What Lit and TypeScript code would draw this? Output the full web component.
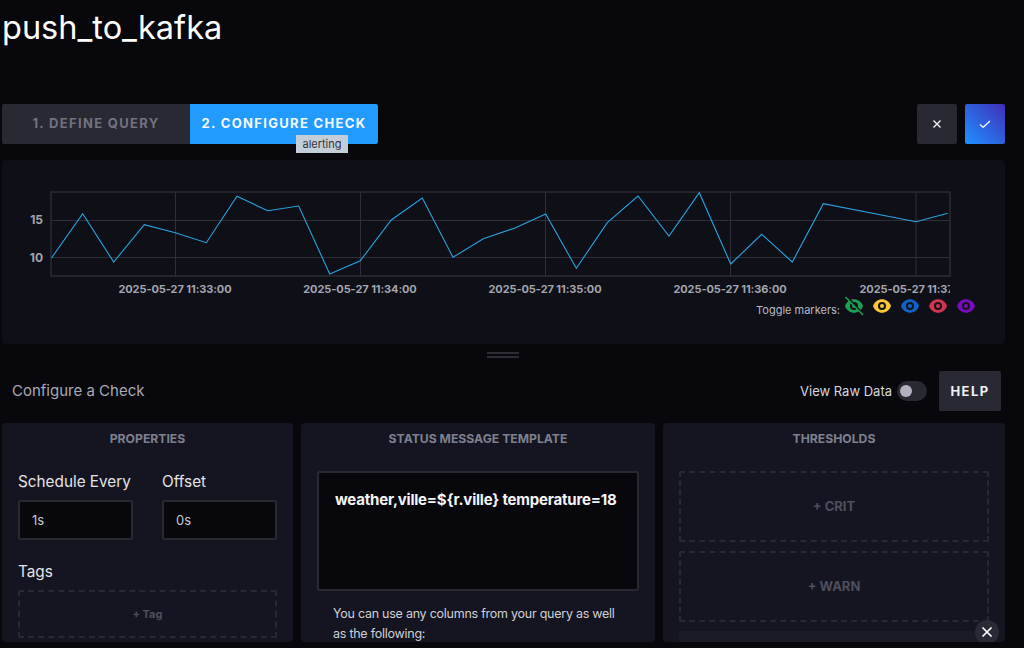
import { LitElement, html, css, svg } from "lit";
import { customElement } from "lit/decorators.js";

const PTS: [number, number][] = [
  [51.5,258],[82.7,213.7],[113.7,262],[144.3,224.7],[175.3,232.7],[206.3,242.7],[237,196.3],[267.7,210.7],[298.7,206],[329.7,274],[360.3,260.7],[391.3,220],[422.3,198],[453,257.3],[483.3,238.7],[515,228],[545.7,214],[576.3,268.3],[607.3,222.7],[638,196],[669,236],[699.3,192.7],[730.7,264],[761.7,234.3],[792.3,262],[823.3,203.7],[916,221.7],[947.7,213.3],
];
const VX = [175.5, 360.5, 545.5, 730.5, 916];
const TIMES = ["11:33:00", "11:34:00", "11:35:00", "11:36:00", "11:37:00"];
const EYES = [
  { c: "#1f9e55", off: true },
  { c: "#fdc836", off: false },
  { c: "#1161c9", off: false },
  { c: "#d5344f", off: false },
  { c: "#7a0cc0", off: false },
];

@customElement("app-root")
export class AppRoot extends LitElement {
  static styles = css`
    :host { display: block; width: 1024px; height: 648px; overflow: hidden; background: #07070c; font-family: "Inter", "Liberation Sans", sans-serif; color: #f1f1f3; }
    .page { box-sizing: border-box; height: 648px; padding: 0 19px 0 2px; display: flex; flex-direction: column; }
    h1 { margin: 0; height: 104px; box-sizing: border-box; padding-top: 9px; font-size: 32.5px; line-height: 38px; font-weight: 400; color: #fff; }
    .bar { display: flex; justify-content: space-between; height: 40px; margin-bottom: 16px; }
    .tabs { display: flex; position: relative; }
    .tab { width: 188px; height: 40px; display: flex; align-items: center; justify-content: center; font-size: 13px; font-weight: 700; letter-spacing: 1.33px; box-sizing: border-box; padding-bottom: 2px; }
    .tab.a { background: #292933; color: #72727f; border-radius: 2px 0 0 2px; }
    .tab.b { background: #229bff; color: #f4f9ff; border-radius: 0 2px 2px 0; }
    .tip { position: absolute; left: 294px; top: 31px; width: 52px; height: 18px; background: #c4ced9; color: #33343c; font-size: 11px; display: flex; align-items: center; justify-content: center; }
    .actions { display: flex; gap: 8px; }
    .act { width: 40px; height: 40px; border-radius: 2px; display: flex; align-items: center; justify-content: center; }
    .act.x { background: #292933; }
    .act.ok { background: linear-gradient(45deg, #1f91ff 0%, #3f2fb8 100%); }
    .graph { height: 184px; background: #0e0f17; border-radius: 4px; display: flex; flex-direction: column; }
    .chart { display: block; width: 1003px; height: 140px; }
    .ax { font: 700 11px "Inter", sans-serif; fill: #a4a5b0; letter-spacing: -0.08px; }
    .ay { font: 700 12px "Inter", sans-serif; fill: #a4a5b0; }
    .toggle { display: flex; justify-content: flex-end; align-items: flex-start; gap: 10px; padding-right: 30px; height: 20px; font-size: 11px; color: #b9bac3; }
    .toggle span { margin-right: -5px; line-height: 20px; }
    .toggle svg { display: block; margin-top: -1px; overflow: visible; }
    .split { height: 27px; box-sizing: border-box; padding-top: 8px; display: flex; justify-content: center; }
    .split i { display: block; width: 32px; border-top: 2px solid #2c2c37; border-bottom: 2px solid #2c2c37; height: 2px; margin-left: -1px; }
    .head { height: 40px; margin-bottom: 12px; display: flex; align-items: center; padding: 0 4px 0 10px; }
    .head .ttl { font-size: 15px; color: #a9aab4; flex: 1; padding-bottom: 1px; }
    .raw { font-size: 13px; color: #d6d6dc; margin-right: 5px; }
    .sw { width: 30px; height: 20px; border-radius: 10px; background: #292933; display: flex; align-items: center; padding-left: 3px; box-sizing: border-box; margin-right: 12px; }
    .sw i { display: block; width: 12px; height: 12px; border-radius: 50%; background: #b3b1c0; }
    .help { width: 62px; height: 40px; background: #292933; border-radius: 2px; display: flex; align-items: center; justify-content: center; font-size: 13px; font-weight: 700; letter-spacing: 1.4px; color: #f1f1f3; }
    .panels { display: grid; grid-template-columns: 291px 354px 342px; gap: 8px; height: 219px; margin: 0 0 6px; }
    .panel { position: relative; background: #141520; border-radius: 4px; overflow: hidden; box-sizing: border-box; padding: 8px 16px 0; }
    .pt { text-align: center; font-size: 12.2px; font-weight: 700; color: #7f808e; line-height: 15px; margin-bottom: 25px; }
    .fields { display: flex; gap: 29px; padding-top: 1px; }
    .lbl { font-size: 15.3px; line-height: 20px; color: #e4e4e8; margin-bottom: 8px; }
    .inp { width: 115px; height: 40px; box-sizing: border-box; background: #07070c; border: 2px solid #292933; border-radius: 2px; display: flex; align-items: center; padding-left: 12px; font-size: 13px; color: #c9c9d0; }
    .tags { margin-top: 22px; }
    .dash { border: 2px dashed #292933; border-radius: 2px; display: flex; align-items: center; justify-content: center; box-sizing: border-box; color: #4e4f5c; font-weight: 700; }
    .dash.tag { height: 48px; font-size: 11px; }
    .dash.th { height: 71px; font-size: 13px; margin-bottom: 9px; padding-bottom: 2px; }
    .tpl { height: 120px; box-sizing: border-box; background: #07070c; border: 2px solid #292933; border-radius: 2px; padding: 16px; font-size: 15px; font-weight: 700; letter-spacing: -0.2px; white-space: nowrap; color: #f4f4f6; line-height: 22px; margin-bottom: 13px; }
    .hint { font-size: 12.5px; letter-spacing: -0.25px; line-height: 20px; color: #d0d0d6; padding-left: 16px; margin: 0; width: 290px; }
    .stub { height: 12px; background: #1b1b25; }
    .close { position: absolute; right: 6px; bottom: 0; width: 24px; height: 24px; margin-bottom: -2px; border-radius: 50%; background: #2a2a36; display: flex; align-items: center; justify-content: center; }
  `;

  eye(c: string, off: boolean) {
    return html`<svg width="18" height="14" viewBox="0 0 18 14">
      <path d="M0 7 C3 -2 15 -2 18 7 C15 16 3 16 0 7Z" fill=${c}></path>
      <circle cx="9" cy="7" r="4" fill="#14151c"></circle>
      <circle cx="9" cy="7" r="2" fill=${c}></circle>
      ${off ? svg`<path d="M2.5 -1.5 L18.5 15.5" stroke="#0e0f17" stroke-width="2"></path><path d="M0.5 -2 L18 16" stroke=${c} stroke-width="1.5"></path>` : ""}
    </svg>`;
  }

  render() {
    const line = PTS.map((p) => p.join(",")).join(" ");
    return html`<div class="page">
      <h1>push_to_kafka</h1>
      <div class="bar">
        <div class="tabs">
          <div class="tab a">1. DEFINE QUERY</div>
          <div class="tab b">2. CONFIGURE CHECK</div>
          <div class="tip">alerting</div>
        </div>
        <div class="actions">
          <div class="act x"><svg width="10" height="10" viewBox="0 0 10 10"><path d="M1.5 1.5 L8.5 8.5 M8.5 1.5 L1.5 8.5" stroke="#f1f1f3" stroke-width="1.4"></path></svg></div>
          <div class="act ok"><svg width="12" height="10" viewBox="0 0 12 10"><path d="M1 5.5 L4.2 8.3 L11 2" fill="none" stroke="#f1f1f3" stroke-width="1.3"></path></svg></div>
        </div>
      </div>
      <div class="graph">
        <svg class="chart" viewBox="2 160 1003 140">
          <defs><clipPath id="cp"><rect x="40" y="185" width="910" height="115"></rect></clipPath></defs>
          ${VX.map((x) => svg`<line x1=${x} x2=${x} y1="192" y2="276" stroke="#2f2f3b" stroke-width="1"></line>`)}
          <line x1="51" x2="950" y1="220.5" y2="220.5" stroke="#2f2f3b"></line>
          <line x1="51" x2="950" y1="257.5" y2="257.5" stroke="#2f2f3b"></line>
          <rect x="51" y="192" width="899" height="84" fill="none" stroke="#2a2a36" stroke-width="1.6"></rect>
          <polyline points=${line} fill="none" stroke="#2ba3dd" stroke-width="1.1"></polyline>
          <text class="ay" x="43" y="224" text-anchor="end">15</text>
          <text class="ay" x="43" y="262" text-anchor="end">10</text>
          <g clip-path="url(#cp)">
            ${VX.map((x, i) => svg`<text class="ax" x=${x - 0.5} y="293" text-anchor="middle">2025-05-27 ${TIMES[i]}</text>`)}
          </g>
        </svg>
        <div class="toggle">
          <span>Toggle markers:</span>
          ${EYES.map((e) => this.eye(e.c, e.off))}
        </div>
      </div>
      <div class="split"><i></i></div>
      <div class="head">
        <div class="ttl">Configure a Check</div>
        <div class="raw">View Raw Data</div>
        <div class="sw"><i></i></div>
        <div class="help">HELP</div>
      </div>
      <div class="panels">
        <div class="panel">
          <div class="pt">PROPERTIES</div>
          <div class="fields">
            <div><div class="lbl">Schedule Every</div><div class="inp">1s</div></div>
            <div><div class="lbl">Offset</div><div class="inp">0s</div></div>
          </div>
          <div class="tags"><div class="lbl">Tags</div><div class="dash tag">+ Tag</div></div>
        </div>
        <div class="panel">
          <div class="pt">STATUS MESSAGE TEMPLATE</div>
          <div class="tpl">weather,ville=\${r.ville} temperature=18</div>
          <p class="hint">You can use any columns from your query as well as the following:</p>
        </div>
        <div class="panel">
          <div class="pt">THRESHOLDS</div>
          <div class="dash th">+ CRIT</div>
          <div class="dash th">+ WARN</div>
          <div class="stub"></div>
          <div class="close"><svg width="12" height="12" viewBox="0 0 12 12"><path d="M1.5 1.5 L10.5 10.5 M10.5 1.5 L1.5 10.5" stroke="#fff" stroke-width="1.7"></path></svg></div>
        </div>
      </div>
    </div>`;
  }
}
